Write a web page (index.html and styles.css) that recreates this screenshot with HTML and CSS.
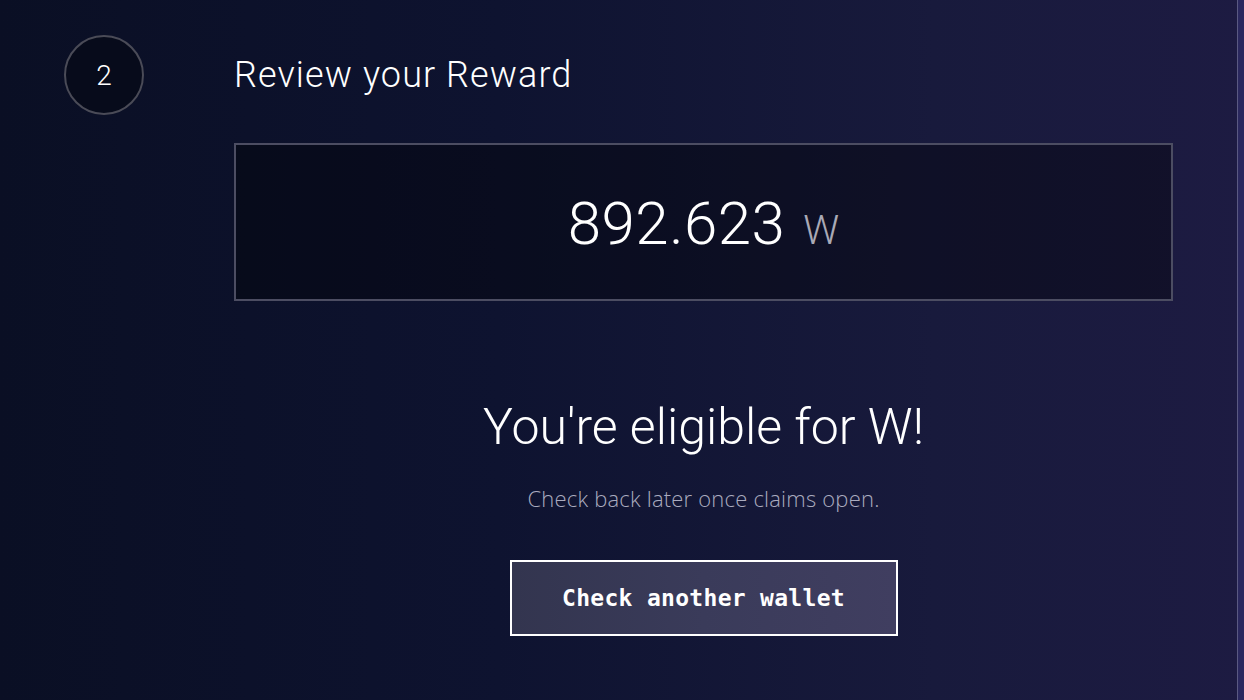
FILE: index.html
```html
<!DOCTYPE html>
<html lang="en">
<head>
<meta charset="utf-8">
<title>Review your Reward</title>
<link rel="stylesheet" href="styles.css">
</head>
<body>
<div class="page">
  <main class="main">
    <div class="step-col">
      <div class="step-circle">2</div>
    </div>
    <section class="content">
      <div class="heading-row">
        <h1 class="heading">Review your Reward</h1>
      </div>
      <div class="reward-box">
        <span class="amount">892.623</span>
        <span class="unit">W</span>
      </div>
      <div class="message">
        <h2 class="eligible">You're eligible for W!</h2>
        <p class="sub">Check back later once claims open.</p>
        <button class="btn" type="button">Check another wallet</button>
      </div>
    </section>
  </main>
  <div class="edge"></div>
</div>
</body>
</html>
```

FILE: styles.css
```css
html, body {
  margin: 0;
  padding: 0;
  height: 700px;
  overflow: hidden;
}
body {
  background: #0b1024;
  color: #fff;
  font-family: Roboto, "Noto Sans", sans-serif;
}
.page {
  display: flex;
  height: 700px;
  background: linear-gradient(90deg, #0a0f24 0%, #0e1330 40%, #181a3c 75%, #1d1b42 100%);
}
.main {
  flex: 1;
  display: flex;
  padding: 35px 0 0 64px;
  box-sizing: border-box;
}
.step-col {
  width: 80px;
  margin-right: 90px;
  flex-shrink: 0;
}
.step-circle {
  width: 80px;
  height: 80px;
  box-sizing: border-box;
  border: 2px solid #4a4b57;
  border-radius: 50%;
  background: #070b1b;
  display: flex;
  align-items: center;
  justify-content: center;
  font-size: 28px;
  font-weight: 300;
  color: #fff;
}
.content {
  width: 939px;
  display: flex;
  flex-direction: column;
}
.heading-row {
  height: 80px;
  display: flex;
  align-items: center;
}
.heading {
  margin: 0;
  font-size: 36px;
  font-weight: 300;
  line-height: 40px;
  letter-spacing: 1.1px;
  color: #fff;
}
.reward-box {
  margin-top: 28px;
  height: 158px;
  box-sizing: border-box;
  border: 2px solid #4c4d62;
  background: rgba(0, 0, 0, 0.35);
  display: flex;
  align-items: baseline;
  justify-content: center;
  padding-top: 44px;
  gap: 18px;
}
.amount {
  font-size: 60px;
  font-weight: 300;
  line-height: 70px;
  color: #fff;
  letter-spacing: 0.5px;
}
.unit {
  font-size: 40px;
  font-weight: 300;
  color: #a9a9b6;
}
.message {
  display: flex;
  flex-direction: column;
  align-items: center;
}
.eligible {
  margin: 96px 0 0;
  font-size: 50px;
  font-weight: 300;
  line-height: 60px;
  color: #fff;
}
.sub {
  margin: 26px 0 0;
  font-family: "Open Sans", "Noto Sans", sans-serif;
  font-size: 22px;
  font-weight: 300;
  line-height: 30px;
  letter-spacing: 0.2px;
  color: #aaabbf;
}
.btn {
  margin-top: 47px;
  width: 388px;
  height: 76px;
  box-sizing: border-box;
  border: 2px solid #ffffff;
  background: linear-gradient(90deg, #33354f 0%, #3a3b5a 50%, #403e60 100%);
  color: #fff;
  font-family: "DejaVu Sans Mono", "Liberation Mono", monospace;
  font-size: 23px;
  font-weight: 700;
  letter-spacing: 0.3px;
  cursor: pointer;
}
.edge {
  width: 6px;
  flex-shrink: 0;
  border-left: 1px solid #5b5a82;
  background: #2a285e;
}
```
